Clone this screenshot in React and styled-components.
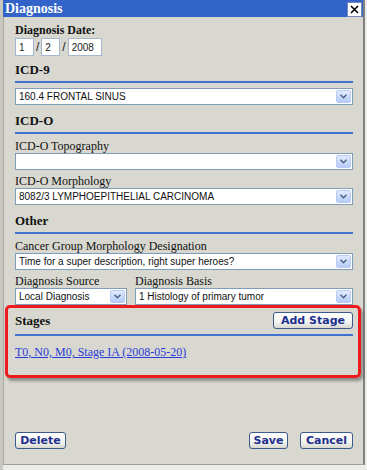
import React from "react";
import styled, { createGlobalStyle } from "styled-components";

const GlobalStyle = createGlobalStyle`
    html, body {
        margin: 0;
        padding: 0;
        background: #e4e4de;
    }
    body {
        width: 367px;
        height: 470px;
        overflow: hidden;
    }
`;

const Page = styled.div`
    display: flex;
    width: 367px;
    height: 470px;
    background: #ecece8;
`;

const LeftStrip = styled.div`
    width: 3px;
    background: #c8c8c0;
`;

const Dialog = styled.div`
    display: flex;
    flex-direction: column;
    width: 362px;
    height: 465px;
    border-right: 2px solid #808080;
    border-bottom: 1px solid #a0a0a0;
    background: #d8d8d0;
    box-sizing: border-box;
`;

const TitleBar = styled.div`
    display: flex;
    align-items: center;
    justify-content: space-between;
    height: 17px;
    padding: 0 1px 0 2px;
    background: #3163c9;
    font-family: "Liberation Serif", "Times New Roman", serif;
    font-weight: bold;
    font-size: 14px;
    color: #ffffff;
`;

const CloseButton = styled.div`
    display: flex;
    align-items: center;
    justify-content: center;
    width: 13px;
    height: 13px;
    margin-top: 2px;
    background: #ffffff;
    border: 1px solid #7a8ab8;
`;

const Body = styled.div`
    display: flex;
    flex-direction: column;
    flex: 1;
    padding: 6px 10px 15px 11px;
    border-left: 1px solid #a8a8a0;
`;

const FieldLabel = styled.div`
    font-family: "Liberation Serif", serif;
    font-size: 12px;
    font-weight: ${(p) => (p.$bold ? "bold" : "normal")};
    color: #111111;
    line-height: 14px;
    margin-top: ${(p) => p.$top || 0}px;
    margin-bottom: ${(p) => (p.$bold ? 1 : 0)}px;
`;

const DateRow = styled.div`
    display: flex;
    align-items: center;
    gap: 2px;
    font-family: "Liberation Sans", Arial, sans-serif;
    font-size: 12px;
    color: #222222;
`;

const TextBox = styled.div`
    display: flex;
    align-items: center;
    box-sizing: border-box;
    width: ${(p) => p.$w}px;
    height: 18px;
    padding: 0 3px;
    background: #ffffff;
    border: 1px solid #a5b7cf;
    font-family: "Liberation Sans", Arial, sans-serif;
    font-size: 10px;
    color: #222222;
`;

const SectionHead = styled.div`
    font-family: "Liberation Serif", serif;
    font-size: 13px;
    font-weight: bold;
    color: #111111;
    line-height: 15px;
    padding-top: ${(p) => p.$top || 0}px;
    padding-bottom: 4px;
    border-bottom: 2px solid #4272d0;
    margin-bottom: 5px;
`;

const Select = styled.div`
    display: flex;
    align-items: center;
    justify-content: space-between;
    box-sizing: border-box;
    width: ${(p) => (p.$w ? `${p.$w}px` : "100%")};
    height: 17px;
    padding: 0 1px 0 3px;
    background: #ffffff;
    border: 1px solid #7f9db9;
    font-family: "Liberation Sans", Arial, sans-serif;
    font-size: 10px;
    color: #111111;
    white-space: nowrap;
    overflow: hidden;
`;

const Arrow = styled.div`
    display: flex;
    align-items: center;
    justify-content: center;
    width: 15px;
    height: 13px;
    flex: none;
    box-sizing: border-box;
    border: 1px solid #b8cbf4;
    border-radius: 2px;
    background: linear-gradient(#e2ebfe, #b6cbf8);
`;

const Row = styled.div`
    display: flex;
    gap: 8px;
`;

const Col = styled.div`
    display: flex;
    flex-direction: column;
    width: ${(p) => (p.$w ? `${p.$w}px` : "auto")};
    flex: ${(p) => (p.$w ? "none" : 1)};
`;

const StagesBox = styled.div`
    margin: 0 -8px 0 -10px;
    padding: 4px 5px 15px 7px;
    border: 3px solid #ec1c1c;
    border-radius: 5px;
    box-shadow: 2px 3px 3px rgba(0, 0, 0, 0.35);
`;

const StagesHead = styled.div`
    display: flex;
    align-items: center;
    justify-content: space-between;
    padding-bottom: 5px;
    border-bottom: 2px solid #4272d0;
    margin-bottom: 6px;
    font-family: "Liberation Serif", serif;
    font-size: 13px;
    font-weight: bold;
    color: #111111;
`;

const Button = styled.div`
    display: flex;
    align-items: center;
    justify-content: center;
    box-sizing: border-box;
    width: ${(p) => p.$w}px;
    height: 17px;
    border: 1px solid #3c5a8a;
    border-radius: 3px;
    background: linear-gradient(#ffffff 0%, #f4f4f0 60%, #d8d8d0 100%);
    font-family: "DejaVu Sans", Verdana, sans-serif;
    font-weight: bold;
    font-size: 11px;
    color: #1e2f8e;
`;

const StageLink = styled.a`
    font-family: "Liberation Serif", serif;
    font-size: 12px;
    line-height: 14px;
    color: #2a3cd8;
    text-decoration: underline;
`;

const Spacer = styled.div`
    flex: 1;
`;

const Footer = styled.div`
    display: flex;
    align-items: center;
    gap: 12px;
`;

const Chevron = () => (
    <svg width="7" height="5" viewBox="0 0 7 5">
        <path d="M0.5 0.8 L3.5 3.8 L6.5 0.8" fill="none" stroke="#4d6185" strokeWidth="1.4" />
    </svg>
);

const Dropdown = ({ value, w }) => (
    <Select $w={w}>
        <span>{value}</span>
        <Arrow>
            <Chevron />
        </Arrow>
    </Select>
);

export default function App() {
    return (
        <Page>
            <GlobalStyle />
            <LeftStrip />
            <Dialog>
                <TitleBar>
                    <span>Diagnosis</span>
                    <CloseButton>
                        <svg width="9" height="9" viewBox="0 0 9 9">
                            <path d="M1 1 L8 8 M8 1 L1 8" stroke="#000" strokeWidth="1.6" />
                        </svg>
                    </CloseButton>
                </TitleBar>
                <Body>
                    <FieldLabel $bold>Diagnosis Date:</FieldLabel>
                    <DateRow>
                        <TextBox $w={19}>1</TextBox>
                        <span>/</span>
                        <TextBox $w={19}>2</TextBox>
                        <span>/</span>
                        <TextBox $w={34}>2008</TextBox>
                    </DateRow>

                    <SectionHead $top={6}>ICD-9</SectionHead>
                    <Dropdown value="160.4 FRONTAL SINUS" />

                    <SectionHead $top={8}>ICD-O</SectionHead>
                    <FieldLabel>ICD-O Topography</FieldLabel>
                    <Dropdown value="" />
                    <FieldLabel $top={4}>ICD-O Morphology</FieldLabel>
                    <Dropdown value="8082/3 LYMPHOEPITHELIAL CARCINOMA" />

                    <SectionHead $top={8}>Other</SectionHead>
                    <FieldLabel>Cancer Group Morphology Designation</FieldLabel>
                    <Dropdown value="Time for a super description, right super heroes?" />
                    <Row>
                        <Col $w={112}>
                            <FieldLabel $top={4}>Diagnosis Source</FieldLabel>
                            <Dropdown value="Local Diagnosis" w={112} />
                        </Col>
                        <Col>
                            <FieldLabel $top={4}>Diagnosis Basis</FieldLabel>
                            <Dropdown value="1 Histology of primary tumor" />
                        </Col>
                    </Row>

                    <StagesBox>
                        <StagesHead>
                            <span>Stages</span>
                            <Button $w={80}>Add Stage</Button>
                        </StagesHead>
                        <StageLink href="#">T0, N0, M0, Stage IA (2008-05-20)</StageLink>
                    </StagesBox>

                    <Spacer />
                    <Footer>
                        <Button $w={51}>Delete</Button>
                        <Spacer />
                        <Button $w={39}>Save</Button>
                        <Button $w={53}>Cancel</Button>
                    </Footer>
                </Body>
            </Dialog>
        </Page>
    );
}
